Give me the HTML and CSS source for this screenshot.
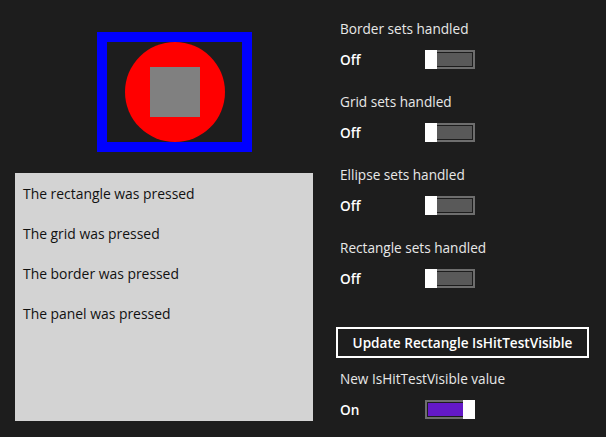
FILE: index.html
```html
<!DOCTYPE html>
<html>
<head>
<meta charset="utf-8">
<link rel="stylesheet" href="styles.css">
</head>
<body>
<div class="page">
  <div class="left">
    <div class="border-box">
      <div class="ellipse"><div class="rect"></div></div>
    </div>
    <div class="panel">
      <div class="msg">The rectangle was pressed</div>
      <div class="msg">The grid was pressed</div>
      <div class="msg">The border was pressed</div>
      <div class="msg">The panel was pressed</div>
    </div>
  </div>
  <div class="right">
    <div class="group">
      <div class="label">Border sets handled</div>
      <div class="toggle-row"><span class="state">Off</span><span class="toggle off"><span class="fill"></span><span class="thumb"></span></span></div>
    </div>
    <div class="group">
      <div class="label">Grid sets handled</div>
      <div class="toggle-row"><span class="state">Off</span><span class="toggle off"><span class="fill"></span><span class="thumb"></span></span></div>
    </div>
    <div class="group">
      <div class="label">Ellipse sets handled</div>
      <div class="toggle-row"><span class="state">Off</span><span class="toggle off"><span class="fill"></span><span class="thumb"></span></span></div>
    </div>
    <div class="group">
      <div class="label">Rectangle sets handled</div>
      <div class="toggle-row"><span class="state">Off</span><span class="toggle off"><span class="fill"></span><span class="thumb"></span></span></div>
    </div>
    <button class="btn">Update Rectangle IsHitTestVisible</button>
    <div class="group last">
      <div class="label">New IsHitTestVisible value</div>
      <div class="toggle-row"><span class="state">On</span><span class="toggle on"><span class="fill"></span><span class="thumb"></span></span></div>
    </div>
  </div>
</div>
</body>
</html>
```
FILE: styles.css
```css
html, body {
  margin: 0;
  padding: 0;
  background: #1d1d1d;
}
body {
  font-family: "Open Sans", "Noto Sans", sans-serif;
  color: #ffffff;
  width: 606px;
  height: 437px;
  overflow: hidden;
}
.page {
  display: flex;
}
.left {
  width: 298px;
  margin-left: 15px;
  padding-top: 32px;
}
.border-box {
  margin-left: 82px;
  width: 135px;
  height: 100px;
  border: 10px solid #0000ff;
  display: flex;
  justify-content: center;
}
.ellipse {
  width: 100px;
  height: 100px;
  border-radius: 50%;
  background: #ff0000;
  display: flex;
  align-items: center;
  justify-content: center;
  margin-left: 1px;
}
.rect {
  width: 50px;
  height: 50px;
  background: #808080;
}
.panel {
  margin-top: 21px;
  height: 248px;
  background: #d3d3d3;
  padding: 11px 0 0 8px;
  box-sizing: border-box;
}
.msg {
  color: #111111;
  font-size: 13.9px;
  line-height: 20px;
  height: 40px;
}
.right {
  margin-left: 27px;
  padding-top: 19px;
  width: 260px;
  display: flex;
  flex-direction: column;
  align-items: flex-start;
}
.group {
  margin-bottom: 23px;
}
.label {
  font-size: 13.6px;
  line-height: 20px;
  color: #e8e8e8;
}
.toggle-row {
  display: flex;
  align-items: center;
  margin-top: 11px;
  height: 19px;
}
.state {
  width: 85px;
  font-size: 13.6px;
  font-weight: 600;
  line-height: 19px;
}
.toggle {
  position: relative;
  width: 50px;
  height: 19px;
  box-sizing: border-box;
  border: 2px solid #6e6e6e;
  padding: 1px;
  display: flex;
}
.fill {
  flex: 1;
  background: #595959;
}
.toggle.on .fill {
  background: #6419c8;
}
.thumb {
  position: absolute;
  top: -2px;
  width: 12px;
  height: 19px;
  background: #ffffff;
}
.toggle.off .thumb {
  left: -2px;
}
.toggle.on .thumb {
  right: -2px;
}
.btn {
  display: block;
  margin: 16px 0 0 -4px;
  width: 253px;
  height: 31px;
  background: transparent;
  border: 2px solid #ffffff;
  color: #ffffff;
  font-family: "Open Sans", "Noto Sans", sans-serif;
  font-size: 13.6px;
  font-weight: 600;
  padding: 0;
}
.group.last {
  margin-top: 11px;
  margin-bottom: 0;
}
```
